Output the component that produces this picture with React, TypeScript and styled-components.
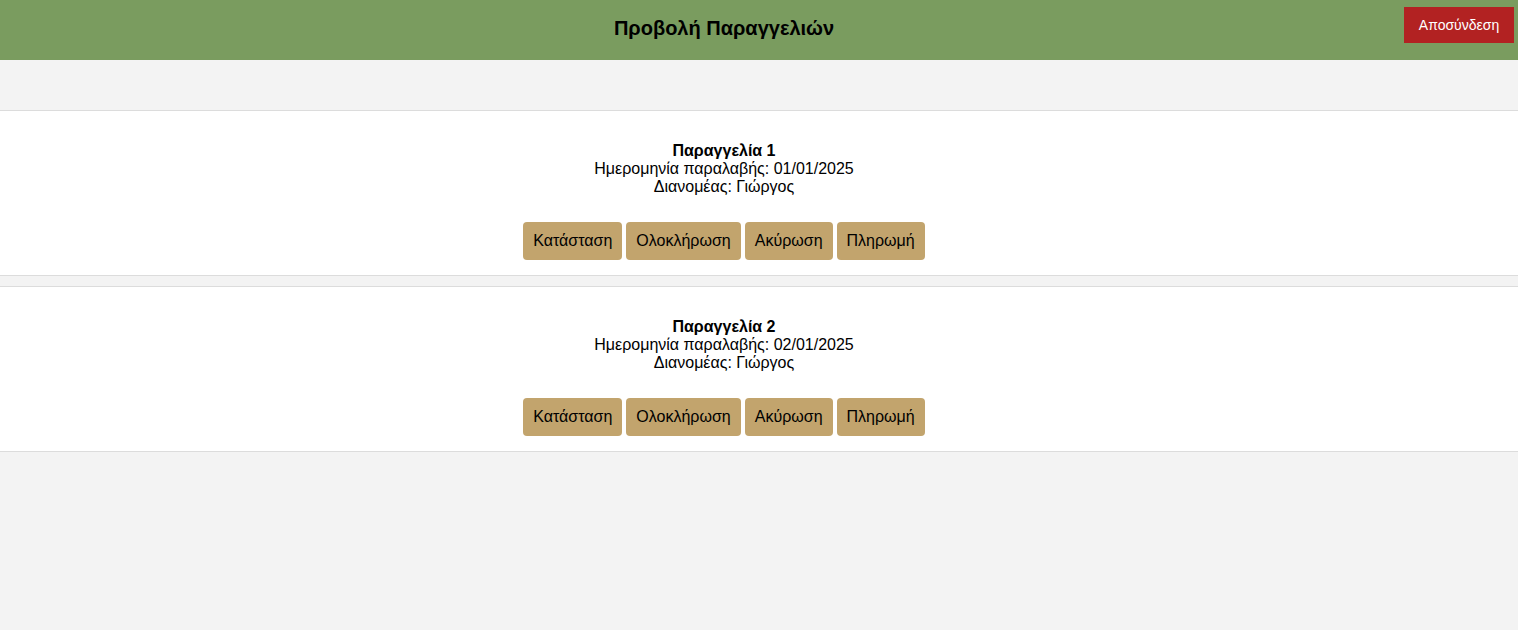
import styled, { createGlobalStyle } from "styled-components";

const GlobalStyle = createGlobalStyle`
  body {
    margin: 0;
    background: #f3f3f3;
    font-family: "Liberation Sans", Arial, sans-serif;
  }
`;

const Header = styled.header`
  height: 60px;
  background: #7a9c5f;
  display: flex;
  align-items: flex-start;
`;

const Title = styled.h1`
  flex: 1;
  margin: 0;
  padding-left: 44px;
  line-height: 56px;
  text-align: center;
  font-size: 20px;
  font-weight: bold;
  color: #000;
`;

const LogoutButton = styled.button`
  margin: 7px 4px 0 0;
  width: 110px;
  height: 36px;
  border: none;
  background: #b22222;
  color: #fff;
  font-family: inherit;
  font-size: 14px;
  cursor: pointer;
`;

const List = styled.main`
  padding-top: 50px;
  display: flex;
  flex-direction: column;
  gap: 10px;
`;

const OrderCard = styled.section`
  background: #fff;
  border-top: 1px solid #dcdcdc;
  border-bottom: 1px solid #dcdcdc;
  padding: 31px 70px 15px 0;
  text-align: center;
  font-size: 16px;
  line-height: 18px;
  color: #000;
`;

const OrderTitle = styled.div`
  font-weight: bold;
`;

const Actions = styled.div`
  margin-top: 26px;
  display: flex;
  justify-content: center;
  gap: 4px;
`;

const ActionButton = styled.button`
  height: 38px;
  padding: 0 10px;
  border: none;
  border-radius: 4px;
  background: #c2a46d;
  color: #000;
  font-family: inherit;
  font-size: 16px;
  cursor: pointer;
`;

const orders = [
  { id: 1, date: "01/01/2025", courier: "Γιώργος" },
  { id: 2, date: "02/01/2025", courier: "Γιώργος" },
];

const actions = ["Κατάσταση", "Ολοκλήρωση", "Ακύρωση", "Πληρωμή"];

const App = () => {
  return (
    <>
      <GlobalStyle />
      <Header>
        <Title>Προβολή Παραγγελιών</Title>
        <LogoutButton>Αποσύνδεση</LogoutButton>
      </Header>
      <List>
        {orders.map((o) => (
          <OrderCard key={o.id}>
            <OrderTitle>Παραγγελία {o.id}</OrderTitle>
            <div>Ημερομηνία παραλαβής: {o.date}</div>
            <div>Διανομέας: {o.courier}</div>
            <Actions>
              {actions.map((a) => (
                <ActionButton key={a}>{a}</ActionButton>
              ))}
            </Actions>
          </OrderCard>
        ))}
      </List>
    </>
  );
};

export default App;
